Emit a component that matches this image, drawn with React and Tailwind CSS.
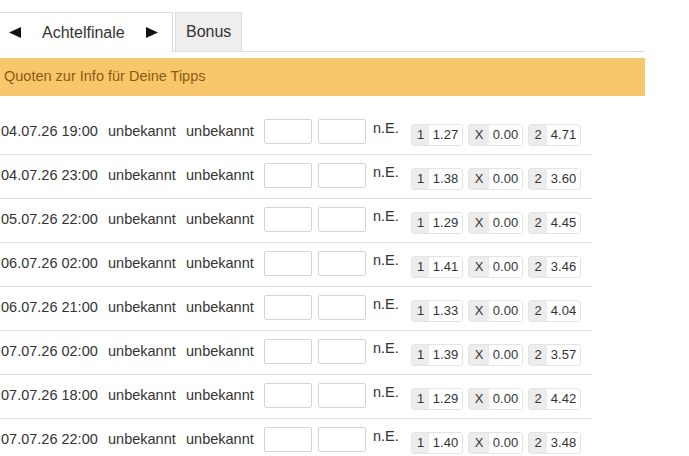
import React from "react";

const rows = [
  ["04.07.26 19:00", "1.27", "0.00", "4.71"],
  ["04.07.26 23:00", "1.38", "0.00", "3.60"],
  ["05.07.26 22:00", "1.29", "0.00", "4.45"],
  ["06.07.26 02:00", "1.41", "0.00", "3.46"],
  ["06.07.26 21:00", "1.33", "0.00", "4.04"],
  ["07.07.26 02:00", "1.39", "0.00", "3.57"],
  ["07.07.26 18:00", "1.29", "0.00", "4.42"],
  ["07.07.26 22:00", "1.40", "0.00", "3.48"],
];

function Odd({ label, value, lw }) {
  return (
    <div className="flex h-[22px] border border-[#e4e4e4] rounded-[3px] overflow-hidden text-[13px] leading-[20px] text-[#333]">
      <div className={"bg-[#ececec] text-center " + lw}>{label}</div>
      <div className="bg-white w-[33px] text-center">{value}</div>
    </div>
  );
}

export default function App() {
  return (
    <div
      className="bg-white w-[689px] h-[456px] overflow-hidden text-[#333]"
      style={{ fontFamily: '"Liberation Sans", Arial, sans-serif' }}
    >
      <div className="w-[645px]">
        <div className="pt-[12px] flex items-start border-b border-[#dddddd] h-[52px]">
          <div className="w-[173px] h-[40px] bg-white border-t border-r border-[#dddddd] flex items-center text-[16px]">
            <svg width="12" height="11" viewBox="0 0 12 11" className="ml-[9px]">
              <polygon points="0,5.5 12,0 12,11" fill="#111" />
            </svg>
            <span className="ml-[21px]">Achtelfinale</span>
            <svg width="12" height="11" viewBox="0 0 12 11" className="ml-[21px]">
              <polygon points="12,5.5 0,0 0,11" fill="#111" />
            </svg>
          </div>
          <div className="ml-[2px] h-[39px] px-[10px] bg-[#eeeeee] border border-b-0 border-[#dddddd] flex items-center text-[16px]">
            Bonus
          </div>
        </div>
        <div className="mt-[6px] h-[38px] bg-[#f8c66b] flex items-center pl-[4px] text-[14.5px] text-[#8a5c10]">
          Quoten zur Info für Deine Tipps
        </div>
      </div>
      <div className="mt-[15px] w-[592px]">
        {rows.map((r, i) => (
          <div key={i} className="h-[44px] border-b border-[#e0e0e0] flex items-start text-[14.5px]">
            <div className="w-[108px] mt-[10px] leading-[20px] pl-[1px]">{r[0]}</div>
            <div className="w-[78px] mt-[10px] leading-[20px]">unbekannt</div>
            <div className="w-[78px] mt-[10px] leading-[20px]">unbekannt</div>
            <div className="mt-[8px] w-[48px] h-[25px] border border-[#d4d4d4] rounded-[2px] bg-white" />
            <div className="ml-[6px] mt-[8px] w-[48px] h-[25px] border border-[#d4d4d4] rounded-[2px] bg-white" />
            <div className="ml-[7px] mt-[7px] leading-[20px] w-[38px]">n.E.</div>
            <div className="mt-[13px] flex gap-[5px]">
              <Odd label="1" value={r[1]} lw="w-[17px]" />
              <Odd label="X" value={r[2]} lw="w-[20px]" />
              <Odd label="2" value={r[3]} lw="w-[18px]" />
            </div>
          </div>
        ))}
      </div>
    </div>
  );
}
